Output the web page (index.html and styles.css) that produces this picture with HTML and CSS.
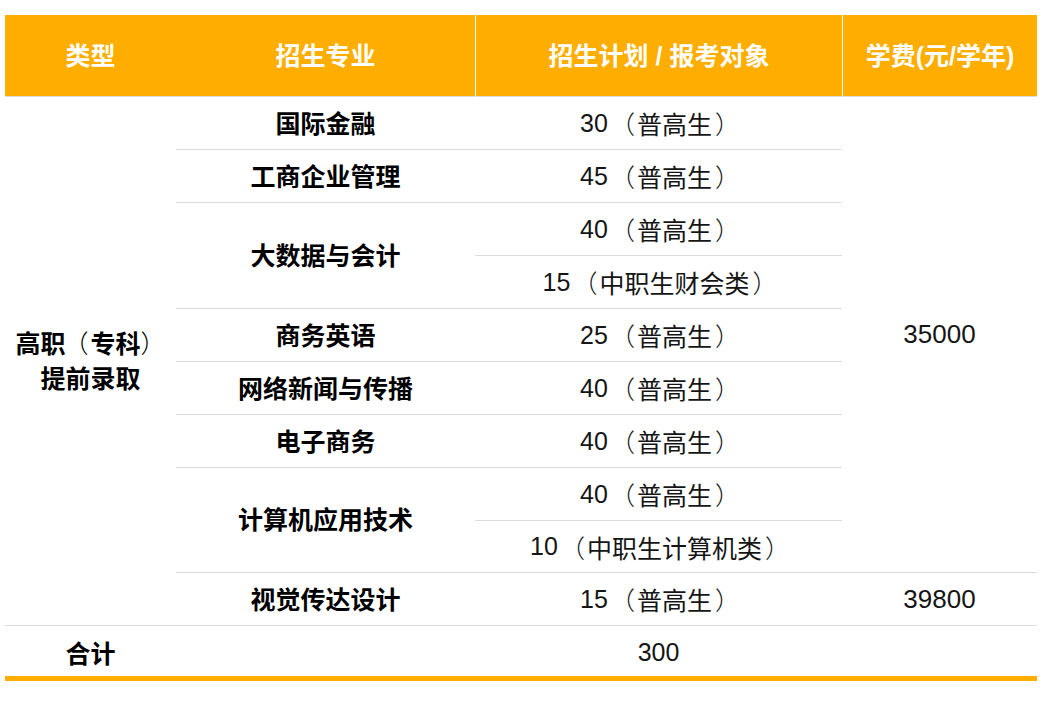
FILE: index.html
```html
<!DOCTYPE html>
<html lang="zh-CN">
<head>
<meta charset="utf-8">
<title>招生计划</title>
<link rel="stylesheet" href="styles.css">
</head>
<body>
<div class="plan">
  <div class="cell head">类型</div>
  <div class="cell head">招生专业</div>
  <div class="cell head sep">招生计划 / 报考对象</div>
  <div class="cell head sep">学费(元/学年)</div>

  <div class="cell kind"><span>高职<span class="lp">（</span>专科<span class="rp">）</span></span><span>提前录取</span></div>
  <div class="cell fee fee-a">35000</div>

  <div class="cell major">国际金融</div>
  <div class="cell num">30<span class="lp">（</span>普高生<span class="rp">）</span></div>

  <div class="cell major">工商企业管理</div>
  <div class="cell num">45<span class="lp">（</span>普高生<span class="rp">）</span></div>

  <div class="cell major span2">大数据与会计</div>
  <div class="cell num">40<span class="lp">（</span>普高生<span class="rp">）</span></div>
  <div class="cell num">15<span class="lp">（</span>中职生财会类<span class="rp">）</span></div>

  <div class="cell major">商务英语</div>
  <div class="cell num">25<span class="lp">（</span>普高生<span class="rp">）</span></div>

  <div class="cell major">网络新闻与传播</div>
  <div class="cell num">40<span class="lp">（</span>普高生<span class="rp">）</span></div>

  <div class="cell major">电子商务</div>
  <div class="cell num">40<span class="lp">（</span>普高生<span class="rp">）</span></div>

  <div class="cell major span2">计算机应用技术</div>
  <div class="cell num">40<span class="lp">（</span>普高生<span class="rp">）</span></div>
  <div class="cell num">10<span class="lp">（</span>中职生计算机类<span class="rp">）</span></div>

  <div class="cell major">视觉传达设计</div>
  <div class="cell num">15<span class="lp">（</span>普高生<span class="rp">）</span></div>
  <div class="cell fee">39800</div>

  <div class="cell total label">合计</div>
  <div class="cell total"></div>
  <div class="cell total num">300</div>
  <div class="cell total"></div>
</div>
</body>
</html>
```
FILE: styles.css
```css
html, body {
  margin: 0;
  padding: 0;
  background: #fff;
}

body {
  padding: 15px 0 0 5px;
  font-family: "Liberation Sans", "Noto Sans CJK SC", sans-serif;
  color: #111;
}

.plan {
  width: 1032px;
  display: grid;
  grid-template-columns: 171px 299px 367px 195px;
  grid-template-rows: 82px repeat(8, 53px) 52px 53px 50px;
  border-bottom: 5px solid #ffae00;
}

.cell {
  box-sizing: border-box;
  display: flex;
  align-items: center;
  justify-content: center;
  border-bottom: 1px solid #dcdcdc;
  font-size: 25px;
  white-space: nowrap;
}

.head {
  background: #ffae00;
  color: #fff;
  font-weight: bold;
  padding-bottom: 4px;
}

.head.sep {
  border-left: 1px solid #fff;
}

.kind {
  grid-column: 1;
  grid-row: 2 / 12;
  flex-direction: column;
  font-weight: bold;
  color: #000;
  line-height: 35px;
  padding-top: 2px;
}

.fee-a {
  grid-column: 4;
  grid-row: 2 / 11;
}

.major {
  grid-column: 2;
  font-weight: bold;
  color: #000;
  padding-bottom: 2px;
}

.major.span2 {
  grid-row: span 2;
  padding-bottom: 4px;
}

.num {
  grid-column: 3;
  color: #151515;
}

.fee {
  grid-column: 4;
  color: #151515;
  font-size: 26px;
}

.lp {
  margin-left: -2px;
  margin-right: 2px;
  font-weight: 300;
}

.num .lp {
  margin-left: 2px;
  margin-right: -2px;
  padding-right: 4px;
}

.rp {
  font-weight: 300;
}

.num .rp {
  padding-left: 3px;
  margin-right: -3px;
}

.total {
  border-bottom: none;
  padding-top: 2px;
}

.total.label {
  grid-column: 1;
  font-weight: bold;
  color: #000;
}
```
